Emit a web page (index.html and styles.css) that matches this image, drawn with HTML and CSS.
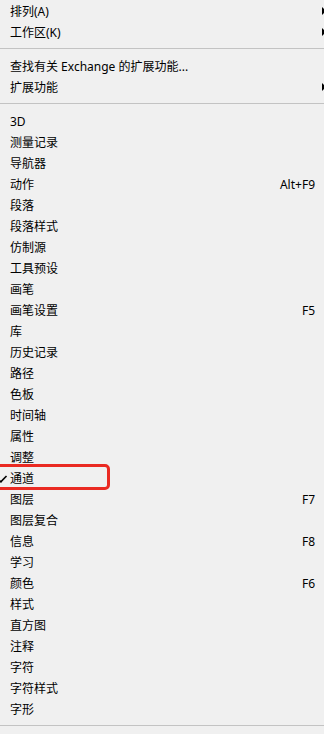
FILE: index.html
```
<!DOCTYPE html>
<html lang="zh-CN">
<head>
<meta charset="utf-8">
<link rel="stylesheet" href="styles.css">
</head>
<body>
<div class="menu">
  <div class="item"><span class="label">排列(A)</span><span class="arrow"></span></div>
  <div class="item"><span class="label">工作区(K)</span><span class="arrow"></span></div>
  <div class="sep"></div>
  <div class="item"><span class="label">查找有关 Exchange 的扩展功能...</span></div>
  <div class="item"><span class="label">扩展功能</span><span class="arrow"></span></div>
  <div class="sep"></div>
  <div class="item"><span class="label">3D</span></div>
  <div class="item"><span class="label">测量记录</span></div>
  <div class="item"><span class="label">导航器</span></div>
  <div class="item"><span class="label">动作</span><span class="key">Alt+F9</span></div>
  <div class="item"><span class="label">段落</span></div>
  <div class="item"><span class="label">段落样式</span></div>
  <div class="item"><span class="label">仿制源</span></div>
  <div class="item"><span class="label">工具预设</span></div>
  <div class="item"><span class="label">画笔</span></div>
  <div class="item"><span class="label">画笔设置</span><span class="key">F5</span></div>
  <div class="item"><span class="label">库</span></div>
  <div class="item"><span class="label">历史记录</span></div>
  <div class="item"><span class="label">路径</span></div>
  <div class="item"><span class="label">色板</span></div>
  <div class="item"><span class="label">时间轴</span></div>
  <div class="item"><span class="label">属性</span></div>
  <div class="item"><span class="label">调整</span></div>
  <div class="item checked">
    <svg class="check" width="8" height="8" viewBox="0 0 8 8"><path d="M0.5 7.2 L6.5 1" stroke="#000" stroke-width="1.6" fill="none"/><path d="M0 5.5 L1.2 7.4" stroke="#000" stroke-width="1.4" fill="none"/></svg>
    <span class="label">通道</span>
    <span class="highlight"></span>
  </div>
  <div class="item"><span class="label">图层</span><span class="key">F7</span></div>
  <div class="item"><span class="label">图层复合</span></div>
  <div class="item"><span class="label">信息</span><span class="key">F8</span></div>
  <div class="item"><span class="label">学习</span></div>
  <div class="item"><span class="label">颜色</span><span class="key">F6</span></div>
  <div class="item"><span class="label">样式</span></div>
  <div class="item"><span class="label">直方图</span></div>
  <div class="item"><span class="label">注释</span></div>
  <div class="item"><span class="label">字符</span></div>
  <div class="item"><span class="label">字符样式</span></div>
  <div class="item"><span class="label">字形</span></div>
  <div class="sep"></div>
</div>
</body>
</html>
```
FILE: styles.css
```
html, body {
  margin: 0;
  padding: 0;
  background: #f0f0f0;
}
body {
  width: 324px;
  height: 734px;
  overflow: hidden;
  font-family: "Noto Sans", "Noto Sans CJK SC", sans-serif;
  font-size: 12px;
  color: #000;
}
.menu {
  display: flex;
  flex-direction: column;
}
.item {
  position: relative;
  box-sizing: border-box;
  height: 21px;
  display: flex;
  align-items: center;
  padding: 2px 9px 0 10px;
}
.label {
  flex: 1;
  white-space: nowrap;
  line-height: 19px;
}
.key {
  white-space: nowrap;
  line-height: 19px;
}
.arrow {
  position: absolute;
  right: -2px;
  top: 7px;
  width: 0;
  height: 0;
  border-top: 4px solid transparent;
  border-bottom: 4px solid transparent;
  border-left: 4px solid #000;
}
.sep {
  height: 13px;
  display: flex;
  align-items: center;
}
.sep::before {
  content: "";
  display: block;
  width: 100%;
  height: 1px;
  background: #c3c3c3;
  margin-top: -1px;
}
.check {
  position: absolute;
  left: 0;
  top: 8px;
}
.highlight {
  position: absolute;
  left: -12px;
  top: -3px;
  width: 116px;
  height: 20px;
  border: 3px solid #ea2a22;
  border-radius: 5px;
}
```
